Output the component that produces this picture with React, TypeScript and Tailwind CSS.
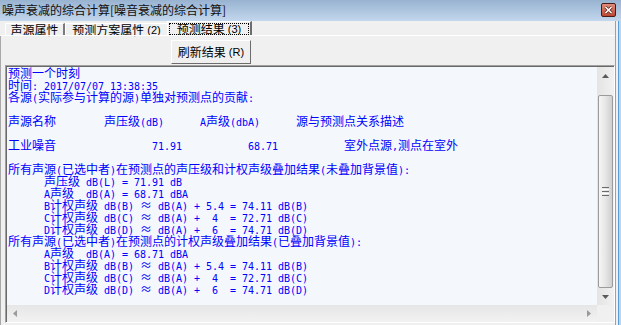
import React from 'react';

const sp = (n: number) => ' '.repeat(n);

const isWide = (c: string) => /[\u2E80-\u9FFF\uFF00-\uFF60\u3000-\u303F\u2248]/.test(c);

const lines: string[] = [
    '预测一个时刻',
    '时间: 2017/07/07 13:38:35',
    '各源(实际参与计算的源)单独对预测点的贡献:',
    '',
    `声源名称${sp(8)}声压级(dB)${sp(6)}A声级(dbA)${sp(6)}源与预测点关系描述`,
    '',
    `工业噪音${sp(16)}71.91${sp(11)}68.71${sp(11)}室外点源,测点在室外`,
    '',
    '所有声源(已选中者)在预测点的声压级和计权声级叠加结果(未叠加背景值):',
    `${sp(6)}声压级 dB(L) = 71.91 dB`,
    `${sp(6)}A声级  dB(A) = 68.71 dBA`,
    `${sp(6)}B计权声级 dB(B) ≈ dB(A) + 5.4 = 74.11 dB(B)`,
    `${sp(6)}C计权声级 dB(C) ≈ dB(A) +  4  = 72.71 dB(C)`,
    `${sp(6)}D计权声级 dB(D) ≈ dB(A) +  6  = 74.71 dB(D)`,
    '所有声源(已选中者)在预测点的计权声级叠加结果(已叠加背景值):',
    `${sp(6)}A声级  dB(A) = 68.71 dBA`,
    `${sp(6)}B计权声级 dB(B) ≈ dB(A) + 5.4 = 74.11 dB(B)`,
    `${sp(6)}C计权声级 dB(C) ≈ dB(A) +  4  = 72.71 dB(C)`,
    `${sp(6)}D计权声级 dB(D) ≈ dB(A) +  6  = 74.71 dB(D)`,
];

// one cell per char: 12px for CJK, 6px for latin (like the old SimSun grid)
function TextLine({ text }: { text: string }) {
    return (
        <div className="flex h-[12px] leading-[12px] whitespace-pre">
            {Array.from(text).map((ch, i) =>
                isWide(ch) ? (
                    <span key={i} className="w-[12px] shrink-0 text-center text-[12px] font-['Noto_Sans_CJK_SC',sans-serif]">
                        {ch}
                    </span>
                ) : (
                    <span key={i} className="w-[6px] shrink-0 pt-[1.5px] text-[10px] font-['DejaVu_Sans_Mono',monospace]">
                        {ch}
                    </span>
                )
            )}
        </div>
    );
}

function Arrow({ dir }: { dir: 'up' | 'down' | 'left' | 'right' }) {
    const pts = {
        up: '0,4 7,4 3.5,0',
        down: '0,0 7,0 3.5,4',
        left: '4,0 4,7 0,3.5',
        right: '0,0 0,7 4,3.5',
    }[dir];
    const vertical = dir === 'up' || dir === 'down';
    return (
        <svg width={vertical ? 7 : 4} height={vertical ? 4 : 7}>
            <polygon points={pts} fill={vertical ? '#5a5a5a' : '#9a9a9a'} />
        </svg>
    );
}

export default function App() {
    return (
        <div className="w-[621px] h-[325px] overflow-hidden bg-[#f0f0f0] text-black font-['Noto_Sans_CJK_SC',sans-serif] text-[12px]">
            {/* title bar */}
            <div className="flex h-[21px] items-start justify-between bg-linear-to-b from-[#98b3d1] to-[#c3d7ed] pr-[5px]">
                <span className="pl-[2px] pt-[3px] leading-[14px] text-[12px] text-[#101010]">
                    噪声衰减的综合计算[噪音衰减的综合计算]
                </span>
                <div className="mt-[3px] flex h-[14px] w-[15px] items-center justify-center rounded-[2px] border border-[#4b1c17] bg-linear-to-b from-[#e08d7c] to-[#bb4630]">
                    <svg width="9" height="8" viewBox="0 0 9 8">
                        <path d="M1.5 1 L7.5 7 M7.5 1 L1.5 7" stroke="#5a2119" strokeWidth="3" />
                        <path d="M1.5 1 L7.5 7 M7.5 1 L1.5 7" stroke="#ffffff" strokeWidth="1.6" />
                    </svg>
                </div>
            </div>

            <div className="flex h-[304px]">
                <div className="flex w-[615px] flex-col">
                    {/* tabs */}
                    <div className="flex h-[14px] items-end">
                        <div className="ml-[5px] flex h-[12px] w-[60px] items-center justify-center border-l border-t border-white border-r-2 border-r-[#7a7a7a] leading-[12px]">
                            声源属性
                        </div>
                        <div className="flex h-[12px] w-[102px] items-center justify-center border-l border-t border-white leading-[12px]">
                            预测方案属性
                            <span className="ml-[3px] text-[11px] font-['Liberation_Sans',sans-serif]">(2)</span>
                        </div>
                        <div className="flex h-[14px] w-[85px] items-center justify-center border-l border-t border-white border-r-2 border-r-[#6d6d6d] px-[1px] pt-[1px]">
                            <div className="flex h-[12px] w-full items-center justify-center border border-dotted border-black leading-[12px]">
                                预测结果
                                <span className="ml-[3px] text-[11px] font-['Liberation_Sans',sans-serif]">(3)</span>
                            </div>
                        </div>
                    </div>
                    <div className="h-[1px] bg-white" />

                    {/* panel */}
                    <div className="flex flex-1 flex-col border-l border-[#a8a8a8] pl-[4px]">
                        <div className="ml-[166px] mt-[4px] flex h-[24px] w-[80px] items-center justify-center border-l border-t border-white border-b border-r border-b-[#6d6d6d] border-r-[#6d6d6d] bg-[#f0f0f0]">
                            刷新结果
                            <span className="ml-[3px] text-[11px] font-['Liberation_Sans',sans-serif]">(R)</span>
                        </div>

                        <div className="mt-[1px] h-[258px] w-[610px] border-l border-t border-[#a0a0a0] border-b border-r border-b-white border-r-white">
                            <div className="grid h-full grid-cols-[1fr_17px] grid-rows-[1fr_17px] border-l border-t border-[#696969]">
                                <div className="overflow-hidden bg-[#f4f7fc] pl-[1px] text-[#0000ff]">
                                    {lines.map((l, i) => (
                                        <TextLine key={i} text={l} />
                                    ))}
                                </div>

                                {/* vertical scrollbar */}
                                <div className="flex flex-col bg-linear-to-r from-[#e4e4e4] to-[#f1f1f1]">
                                    <div className="flex h-[17px] items-center justify-center">
                                        <Arrow dir="up" />
                                    </div>
                                    <div className="h-[11px]" />
                                    <div className="mx-[1px] flex h-[193px] items-center justify-center rounded-[2px] border border-[#9b9b9b] bg-linear-to-r from-[#f5f5f5] via-[#e6e6e6] to-[#cfcfcf]">
                                        <div className="flex flex-col gap-[1px]">
                                            <div className="h-[1px] w-[7px] bg-[#6a6a6a]" />
                                            <div className="h-[1px] w-[7px] bg-white" />
                                            <div className="h-[1px] w-[7px] bg-[#6a6a6a]" />
                                            <div className="h-[1px] w-[7px] bg-white" />
                                            <div className="h-[1px] w-[7px] bg-[#6a6a6a]" />
                                        </div>
                                    </div>
                                    <div className="flex flex-1 items-center justify-center">
                                        <Arrow dir="down" />
                                    </div>
                                </div>

                                {/* horizontal scrollbar */}
                                <div className="flex items-center justify-between bg-linear-to-b from-[#e6e6e6] to-[#f2f2f2] px-[6px]">
                                    <Arrow dir="left" />
                                    <Arrow dir="right" />
                                </div>
                                <div className="bg-[#f0f0f0]" />
                            </div>
                        </div>
                    </div>
                </div>

                {/* right window frame */}
                <div className="flex">
                    <div className="w-[1px] bg-[#a0a0a0]" />
                    <div className="w-[2px] bg-[#f0f0f0]" />
                    <div className="w-[1px] bg-[#5c9ad2]" />
                    <div className="w-[2px] bg-[#bcd4ec]" />
                </div>
            </div>
        </div>
    );
}
